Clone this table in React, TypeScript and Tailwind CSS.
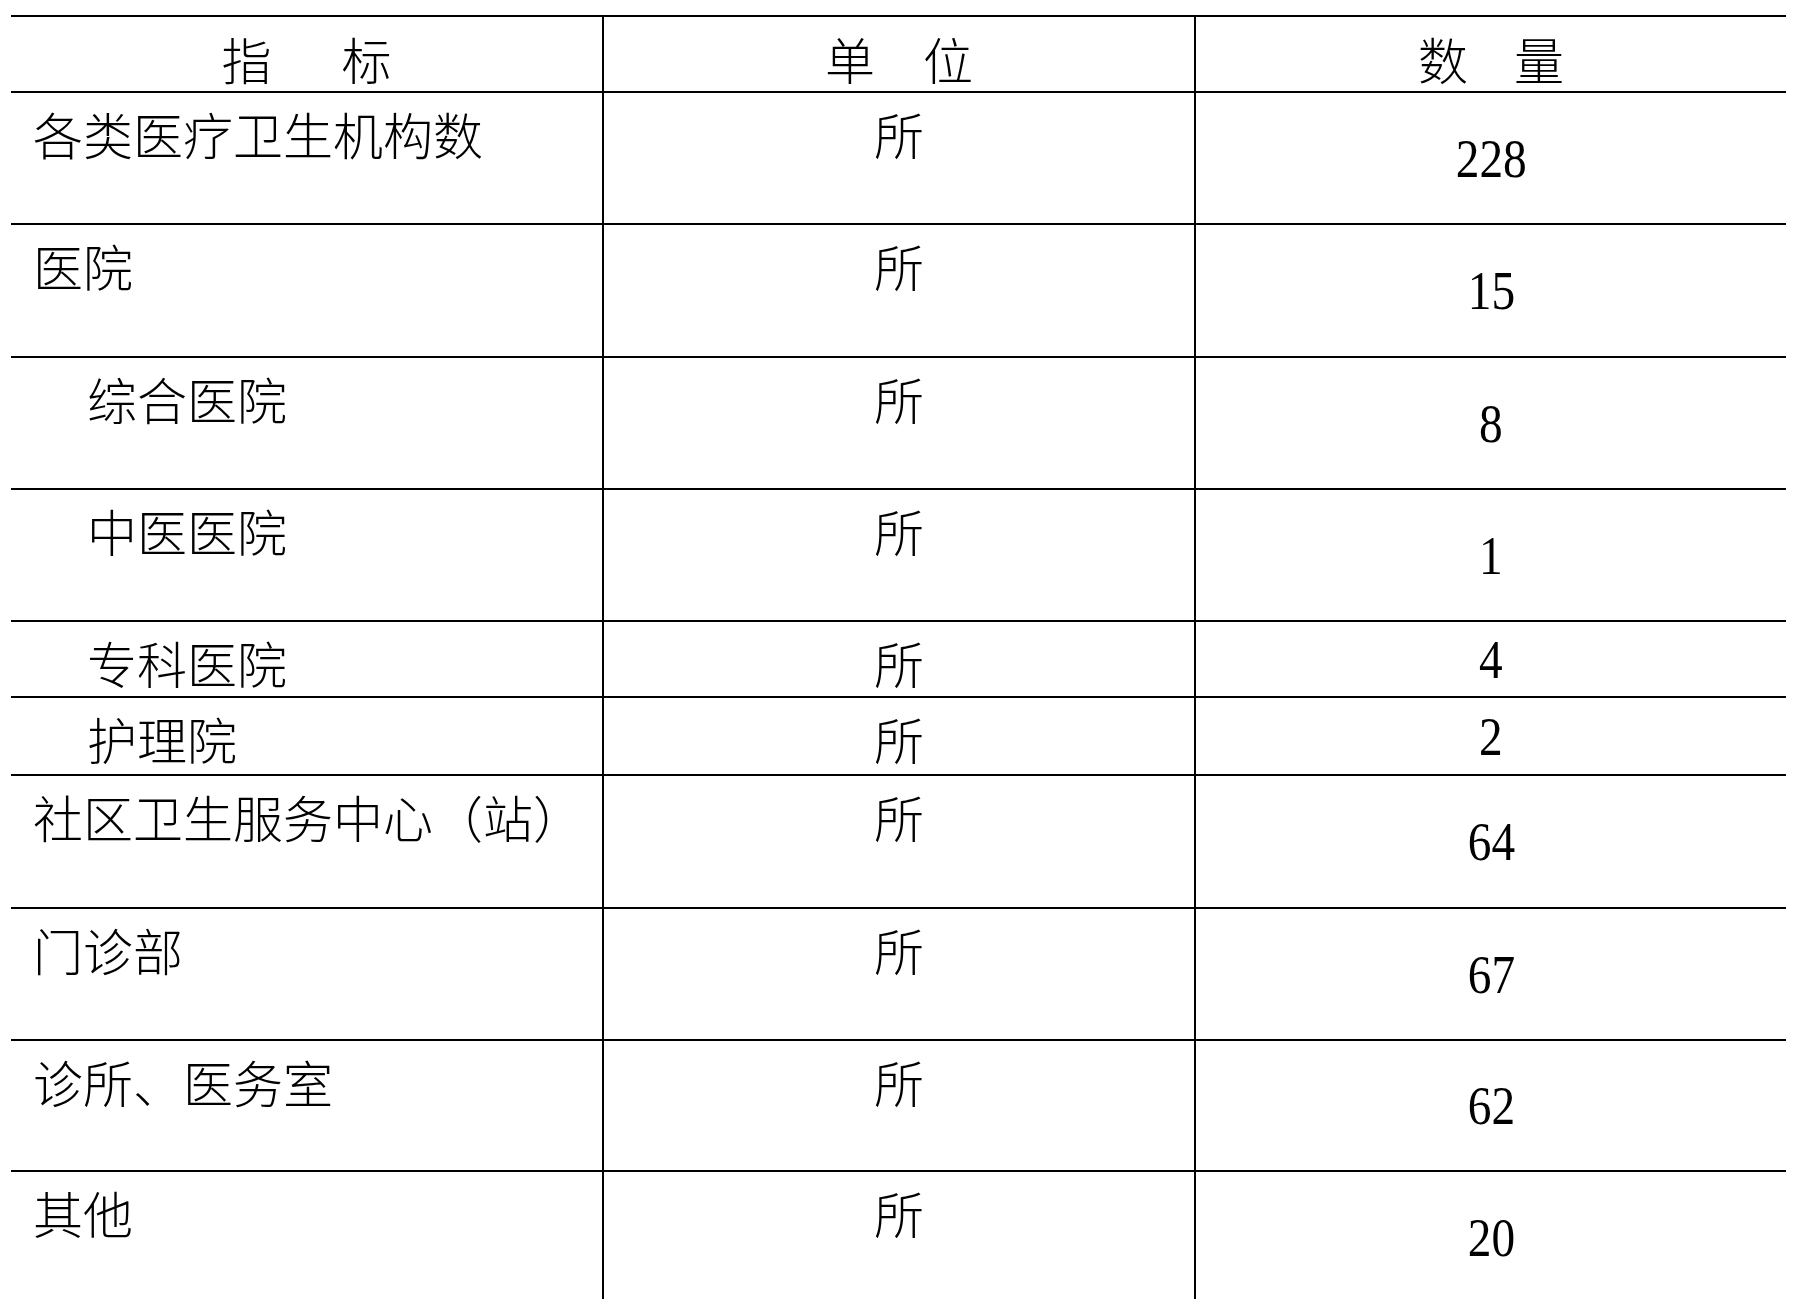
import React from "react";

type Row = { label: string; indent?: boolean; unit: string; value: string; h: string };

const rows: Row[] = [
  { label: "各类医疗卫生机构数", unit: "所", value: "228", h: "h-[132px]" },
  { label: "医院", unit: "所", value: "15", h: "h-[133px]" },
  { label: "综合医院", indent: true, unit: "所", value: "8", h: "h-[132px]" },
  { label: "中医医院", indent: true, unit: "所", value: "1", h: "h-[132px]" },
  { label: "专科医院", indent: true, unit: "所", value: "4", h: "h-[76px]" },
  { label: "护理院", indent: true, unit: "所", value: "2", h: "h-[78px]" },
  { label: "社区卫生服务中心（站）", unit: "所", value: "64", h: "h-[133px]" },
  { label: "门诊部", unit: "所", value: "67", h: "h-[132px]" },
  { label: "诊所、医务室", unit: "所", value: "62", h: "h-[131px]" },
  { label: "其他", unit: "所", value: "20", h: "h-[132px]" },
];

const cjk = "font-['Noto_Sans_CJK_SC',sans-serif] font-light [text-spacing-trim:space-all]";

export default function App() {
  return (
    <div className="min-h-screen bg-white pl-[11px] pt-[15px] text-black">
      <div className="w-[1775px]">
        {/* header */}
        <div className="grid h-[76px] grid-cols-[591px_592px_592px] border-t-2 border-black">
          <div className={`flex items-center justify-center pt-[8px] text-[50px] leading-none ${cjk}`}>
            <span>指</span>
            <span className="ml-[70px]">标</span>
          </div>
          <div className={`flex items-center justify-center border-l-2 border-black pt-[8px] text-[50px] leading-none ${cjk}`}>
            <span>单</span>
            <span className="ml-[48px]">位</span>
          </div>
          <div className={`flex items-center justify-center border-l-2 border-black pt-[8px] text-[50px] leading-none ${cjk}`}>
            <span>数</span>
            <span className="ml-[46px]">量</span>
          </div>
        </div>
        {rows.map((r, i) => (
          <div
            key={i}
            className={`grid ${r.h} grid-cols-[591px_592px_592px] border-t-2 border-black`}
          >
            <div
              className={`${r.indent ? "pl-[76px]" : "pl-[22px]"} pt-[15px] text-[50px] leading-none whitespace-nowrap ${cjk}`}
            >
              {r.label}
            </div>
            <div className={`border-l-2 border-black pt-[15px] text-center text-[50px] leading-none ${cjk}`}>
              {r.unit}
            </div>
            <div className="flex items-center justify-center border-l-2 border-black">
              <span className="inline-block scale-x-[0.86] font-['Liberation_Serif',serif] text-[55px] leading-none">
                {r.value}
              </span>
            </div>
          </div>
        ))}
      </div>
    </div>
  );
}
